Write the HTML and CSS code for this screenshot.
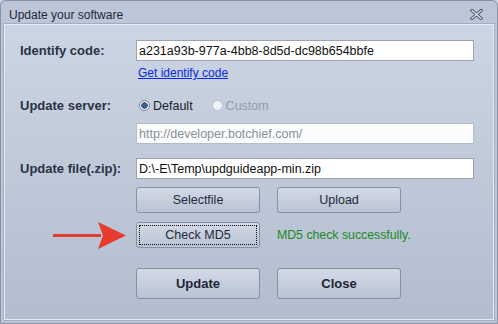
FILE: index.html
```html
<!DOCTYPE html>
<html>
<head>
    <link rel="stylesheet" href="styles.css">
</head>
<body>
    <div class="window">
        <div class="titlebar">
            <span class="title">Update your software</span>
            <svg class="close-x" width="13" height="11" viewBox="0 0 13 11">
                <path d="M2 1.5 L11 9.5 M11 1.5 L2 9.5" stroke="#4d5668" stroke-width="3.2" stroke-linecap="square"/>
                <path d="M2 1.5 L11 9.5 M11 1.5 L2 9.5" stroke="#e9edf3" stroke-width="1.2" stroke-linecap="square"/>
            </svg>
        </div>
        <div class="panel">
            <div class="row">
                <label class="label">Identify code:</label>
                <input class="field" type="text" value="a231a93b-977a-4bb8-8d5d-dc98b654bbfe">
            </div>
            <div class="row link-row">
                <a class="link" href="#">Get identify code</a>
            </div>
            <div class="row server-row">
                <label class="label">Update server:</label>
                <span class="radio checked"></span>
                <span class="radio-text">Default</span>
                <span class="radio disabled"></span>
                <span class="radio-text muted">Custom</span>
            </div>
            <div class="row url-row">
                <input class="field disabled-field" type="text" value="http://developer.botchief.com/" disabled>
            </div>
            <div class="row file-row">
                <label class="label">Update file(.zip):</label>
                <input class="field" type="text" value="D:\-E\Temp\updguideapp-min.zip">
            </div>
            <div class="row btn-row">
                <button class="btn">Selectfile</button>
                <button class="btn">Upload</button>
            </div>
            <div class="row md5-row">
                <div class="arrow">
                    <span class="arrow-line"></span>
                    <svg class="arrow-head" width="28" height="27" viewBox="0 0 28 27">
                        <polygon points="0,0 28,13.5 0,27 5,13.5" fill="#e63b2e"/>
                    </svg>
                </div>
                <button class="btn focused"><span class="focus-ring">Check MD5</span></button>
                <span class="status">MD5 check successfully.</span>
            </div>
            <div class="row action-row">
                <button class="btn big">Update</button>
                <button class="btn big">Close</button>
            </div>
        </div>
    </div>
</body>
</html>
```

FILE: styles.css
```css
* {
    box-sizing: border-box;
}

body {
    margin: 0;
    width: 498px;
    height: 324px;
    overflow: hidden;
    background: #c9d1dd;
    font-family: "Liberation Sans", Arial, sans-serif;
}

.window {
    width: 498px;
    height: 324px;
    border: 1px solid #8892a3;
    border-radius: 6px 6px 0 0;
    background: #bcc6d6;
    padding: 0 2px 2px 2px;
    display: flex;
    flex-direction: column;
}

.titlebar {
    height: 22px;
    display: flex;
    align-items: center;
    justify-content: space-between;
    padding: 0 12px 0 6px;
    flex-shrink: 0;
}

.title {
    font-size: 12px;
    color: #1f283a;
    margin-top: 5px;
}

.close-x {
    margin-top: 5px;
}

.panel {
    flex: 1;
    border: 1px solid #a3aec0;
    box-shadow: inset 0 0 0 1px #e6ebf2;
    background: linear-gradient(#ccd5e3, #b2bdce);
    padding: 16px 0 0 16px;
    display: flex;
    flex-direction: column;
}

.row {
    display: flex;
    align-items: center;
    padding-left: 116px;
    position: relative;
}

.label {
    position: absolute;
    left: 0;
    font-size: 13px;
    font-weight: bold;
    color: #2a3244;
}

.field {
    width: 338px;
    height: 21px;
    border: 1px solid #9aa3b2;
    background: #fff;
    font-family: "Liberation Sans", Arial, sans-serif;
    font-size: 12.5px;
    color: #111;
    padding: 0 2px;
    margin: 0;
}

.disabled-field {
    background: #fbfcfd;
    border-color: #b4bcc8;
    color: #8a8f98;
}

.link-row {
    margin-top: 4px;
    height: 16px;
    padding-left: 118px;
}

.link {
    font-size: 12px;
    color: #0a28e6;
    text-decoration: underline;
}

.server-row {
    margin-top: 14px;
    height: 21px;
}

.radio {
    width: 11px;
    height: 11px;
    border-radius: 50%;
    margin-left: 3px;
    border: 1px solid #8c96a6;
    background: #f4f6f9;
}

.radio.checked {
    background: radial-gradient(circle, #3d5d8e 0 3px, #f4f6f9 3.5px);
    border-color: #6f7c90;
}

.radio.disabled {
    margin-left: 19px;
    border-color: #bcc4d0;
    background: #eef1f5;
}

.radio-text {
    font-size: 12.5px;
    color: #1a2030;
    margin-left: 3px;
}

.radio-text.muted {
    color: #939cac;
}

.url-row {
    margin-top: 7px;
}

.file-row {
    margin-top: 14px;
}

.btn-row {
    margin-top: 8px;
    gap: 17px;
}

.btn {
    width: 124px;
    height: 26px;
    border: 1px solid #8790a1;
    border-radius: 3px;
    background: linear-gradient(#d3dae6, #b9c3d3);
    font-family: "Liberation Sans", Arial, sans-serif;
    font-size: 12.5px;
    color: #232a3a;
    padding: 0;
    display: flex;
    align-items: center;
    justify-content: center;
}

.btn.focused {
    padding: 2px;
}

.focus-ring {
    width: 100%;
    height: 100%;
    border: 1px dotted #111;
    display: flex;
    align-items: center;
    justify-content: center;
}

.md5-row {
    margin-top: 9px;
}

.arrow {
    position: absolute;
    left: 33px;
    top: 0;
    height: 27px;
    display: flex;
    align-items: center;
}

.arrow-line {
    width: 48px;
    height: 3px;
    background: #e63b2e;
    margin-right: -3px;
}

.status {
    margin-left: 17px;
    font-size: 12.3px;
    color: #1b8a1e;
}

.action-row {
    margin-top: 20px;
    gap: 17px;
}

.btn.big {
    height: 31px;
    font-size: 13px;
    font-weight: bold;
    color: #1e2536;
}
```
